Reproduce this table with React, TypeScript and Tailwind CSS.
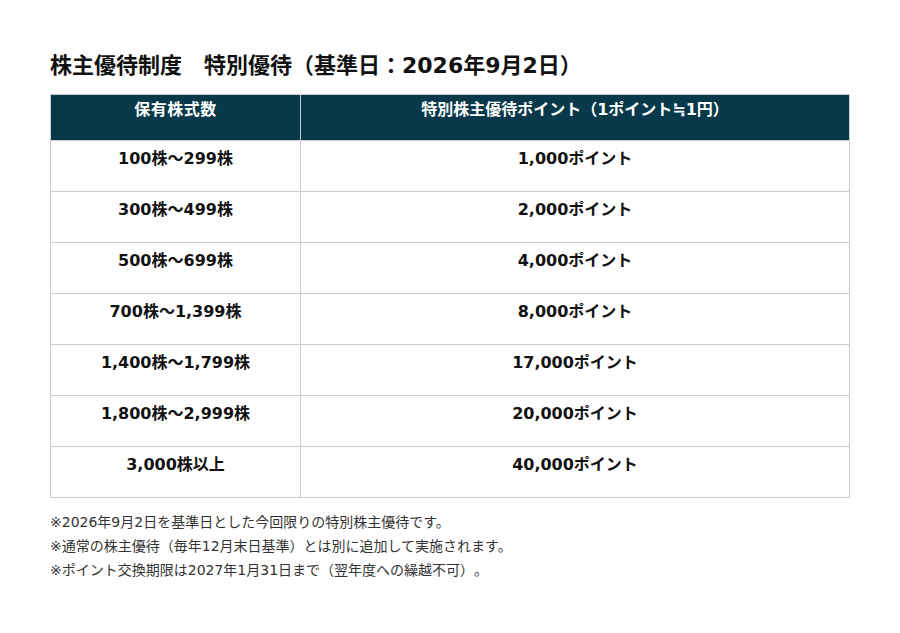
const ROWS = [
  { shares: '100株～299株', points: '1,000ポイント' },
  { shares: '300株～499株', points: '2,000ポイント' },
  { shares: '500株～699株', points: '4,000ポイント' },
  { shares: '700株～1,399株', points: '8,000ポイント' },
  { shares: '1,400株～1,799株', points: '17,000ポイント' },
  { shares: '1,800株～2,999株', points: '20,000ポイント' },
  { shares: '3,000株以上', points: '40,000ポイント' },
];

const NOTES = [
  '※2026年9月2日を基準日とした今回限りの特別株主優待です。',
  '※通常の株主優待（毎年12月末日基準）とは別に追加して実施されます。',
  '※ポイント交換期限は2027年1月31日まで（翌年度への繰越不可）。',
];

const App = () => {
  return (
    <div className="min-h-[633px] w-[900px] bg-white px-[50px] pt-[50px] font-['DejaVu_Sans','Noto_Sans_CJK_JP',sans-serif] text-[#111] [text-spacing-trim:space-all]">
      <h2 className="text-[22px] font-bold leading-[32px]">株主優待制度　特別優待（基準日：2026年9月2日）</h2>

      <div className="mt-[12px] border border-[#ccc]">
        <div className="grid h-[45px] grid-cols-[250px_1fr] bg-[#07394b] text-[16px] font-bold leading-[24px] text-white">
          <div className="border-r border-[#ccc] pt-[3px] text-center tracking-[0.5px]">保有株式数</div>
          <div className="pt-[3px] text-center">特別株主優待ポイント（1ポイント≒1円）</div>
        </div>
        {ROWS.map((row) => (
          <div key={row.shares} className="grid h-[51px] grid-cols-[250px_1fr] border-t border-[#ccc] text-[16px] font-bold leading-[24px]">
            <div className="border-r border-[#ccc] pt-[6px] text-center">{row.shares}</div>
            <div className="pt-[6px] text-center">{row.points}</div>
          </div>
        ))}
      </div>

      <div className="mt-[12px] text-[14px] leading-[24px] text-[#333]">
        {NOTES.map((n) => (
          <p key={n}>{n}</p>
        ))}
      </div>
    </div>
  );
};

export default App;
